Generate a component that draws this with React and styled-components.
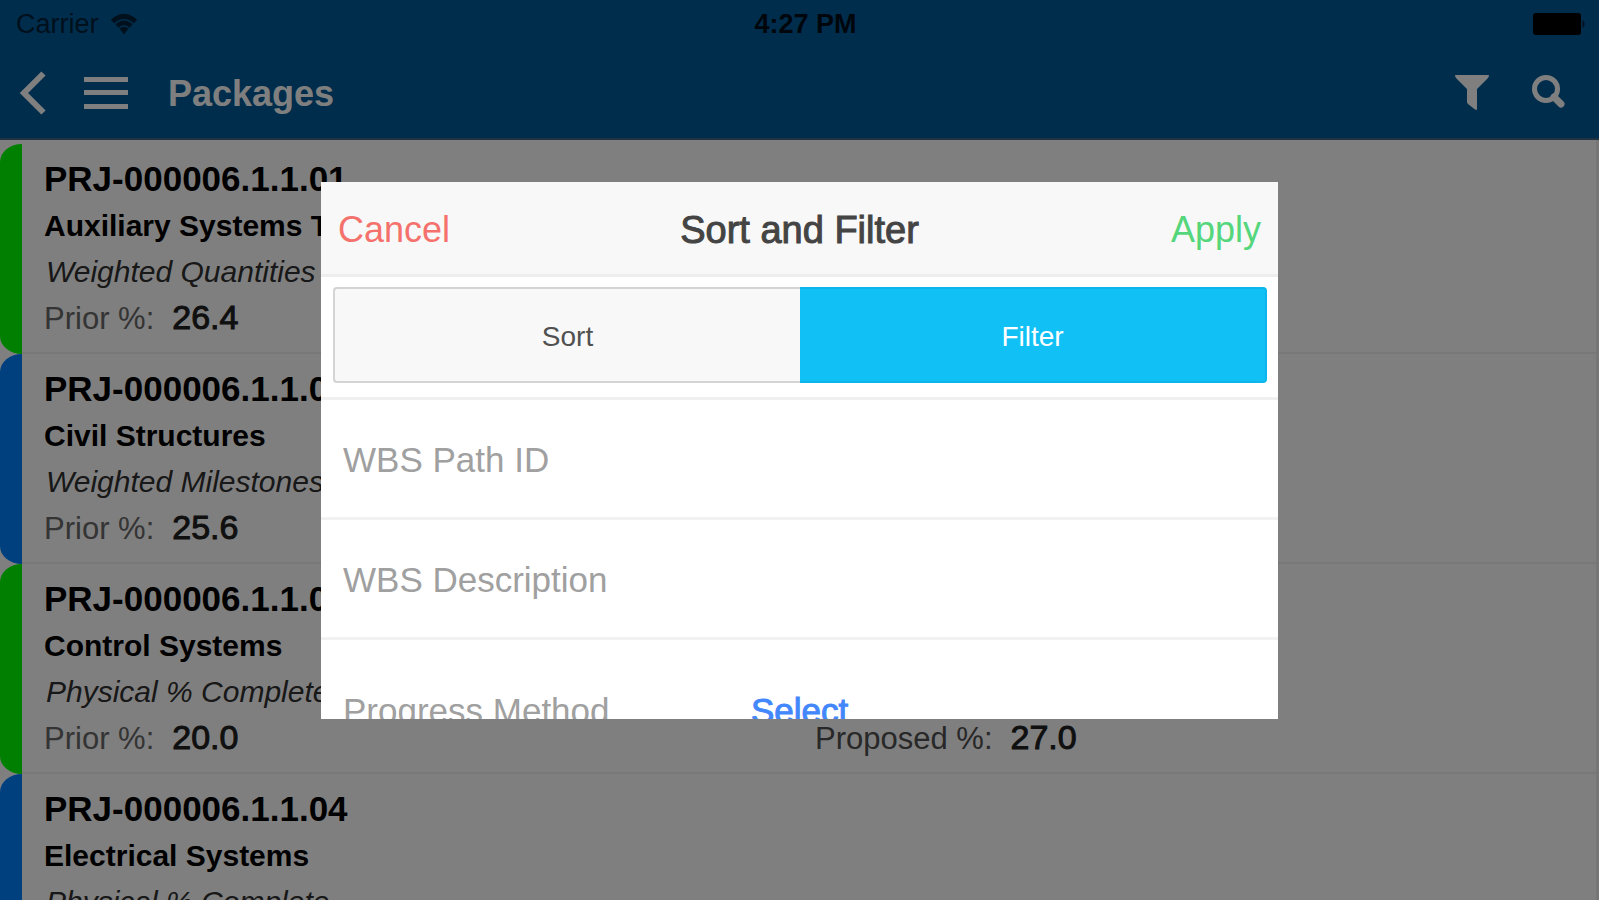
import React from "react";
import styled, { createGlobalStyle } from "styled-components";

const GlobalStyle = createGlobalStyle`
     * {
          box-sizing: border-box;
     }

     body {
          margin: 0;
          overflow: hidden;
          background-color: #ffffff;
          font-family: "Liberation Sans", Arial, sans-serif;
     }

     button, input, select {
          font-family: inherit;
     }
`;

const Page = styled.div`
     height: 100vh;
     overflow: hidden;
`;

const Header = styled.header`
     height: 140px;
     background-color: #005a98;
     border-bottom: 2px solid #406488;
`;

const StatusBar = styled.div`
     display: grid;
     grid-template-columns: 1fr auto 1fr;
     align-items: center;
     height: 48px;
     padding: 0 12px 0 16px;
     font-size: 27px;
`;

const Carrier = styled.div`
     display: flex;
     align-items: center;
     gap: 12px;
     color: #002038;
`;

const Time = styled.div`
     padding-left: 8px;
     font-weight: bold;
     color: #000c18;
`;

const Battery = styled.svg`
     justify-self: end;
`;

const NavBar = styled.nav`
     display: flex;
     align-items: center;
     height: 90px;
     padding: 0 34px 0 18px;
     gap: 38px;
     color: #ffffff;
`;

const IconButton = styled.button`
     display: flex;
     padding: 0;
     border: none;
     background: none;
     color: inherit;
`;

const Title = styled.h1`
     flex: 1;
     margin: 0;
     padding-top: 2px;
     font-size: 36px;
     line-height: 48px;
`;

const List = styled.ul`
     margin: 0;
     padding: 4px 0 0;
     border-right: 3px solid #ececec;
     list-style: none;
`;

const Item = styled.li`
     display: flex;
     height: 210px;
`;

/* Status strip, rounded on the outer side */
const Strip = styled.div`
     width: 22px;
     border-radius: 22px 0 0 22px / 18px 0 0 18px;
     background-color: ${(props) => props.$color};
`;

const ItemBody = styled.div`
     flex: 1;
     padding: 12px 22px 0;
     border-bottom: 2px solid #f0f0f0;
     line-height: 46px;
`;

const Code = styled.div`
     font-size: 35px;
     font-weight: bold;
`;

const Name = styled.div`
     font-size: 30px;
     font-weight: bold;
     line-height: 48px;
`;

const Method = styled.div`
     padding-left: 2px;
     font-size: 30px;
     font-style: italic;
     line-height: 44px;
     color: #303030;
`;

const Values = styled.div`
     display: grid;
     grid-template-columns: 1fr 1fr;
     column-gap: 12px;
`;

const Value = styled.div`
     display: flex;
     align-items: baseline;
     gap: 18px;
     font-size: 31px;
     color: ${(props) => (props.$strong ? "#505050" : "#686868")};

     strong {
          font-size: 34px;
          font-weight: normal;
          color: #202020;
          -webkit-text-stroke: 1px #202020;
     }
`;

const Overlay = styled.div`
     position: fixed;
     inset: 0;
     display: flex;
     padding: 182px 321px 181px;
     background-color: rgba(0, 0, 0, 0.5);
`;

const Dialog = styled.section`
     flex: 1;
     display: flex;
     flex-direction: column;
     overflow: hidden;
     background-color: #ffffff;
`;

const DialogHeader = styled.div`
     display: grid;
     grid-template-columns: 1fr auto 1fr;
     align-items: center;
     flex: none;
     height: 95px;
     padding: 4px 17px 0;
     border-bottom: 3px solid #eeeeee;
     background-color: #f8f8f8;
`;

const DialogTitle = styled.h2`
     margin: 0;
     font-size: 38px;
     font-weight: normal;
     color: #444444;
     -webkit-text-stroke: 1px #444444;
`;

const TextButton = styled.button`
     justify-self: ${(props) => props.$side};
     padding: 0;
     border: none;
     background: none;
     font-size: 36px;
     color: ${(props) => props.$color};
`;

const Segments = styled.div`
     display: flex;
     flex: none;
     height: 123px;
     padding: 10px 11px 14px 12px;
     border-bottom: 3px solid #f0f0f0;
`;

const Segment = styled.button`
     flex: 1;
     padding-top: 4px;
     border: 2px solid ${(props) => (props.$active ? "#0cb6ec" : "#d4d4d4")};
     border-radius: ${(props) => (props.$active ? "0 4px 4px 0" : "4px 0 0 4px")};
     border-${(props) => (props.$active ? "left" : "right")}: none;
     background-color: ${(props) => (props.$active ? "#11c1f5" : "#f8f8f8")};
     font-size: 28px;
     color: ${(props) => (props.$active ? "#ffffff" : "#505050")};
`;

const Field = styled.div`
     display: flex;
     align-items: center;
     flex: none;
     height: ${(props) => (props.$tall ? 142 : 120)}px;
     padding: 2px 22px 0;
     border-bottom: 3px solid #f2f2f2;
     font-size: 35px;
`;

const TextInput = styled.input`
     width: 100%;
     padding: 0;
     border: none;
     outline: none;
     background: none;
     font-size: 35px;
     color: #444444;

     &::placeholder {
          color: #a0a0a0;
     }
`;

const FieldLabel = styled.label`
     width: 408px;
     color: #a0a0a0;
`;

const Select = styled.select`
     appearance: none;
     padding: 0;
     border: none;
     background: none;
     font-size: 35px;
     color: #4387fd;
     -webkit-text-stroke: 1px #4387fd;
`;

const GREEN = "#00ff00";
const BLUE = "#0080ff";

const packages = [
     { code: "PRJ-000006.1.1.01", name: "Auxiliary Systems T", method: "Weighted Quantities", prior: "26.4", color: GREEN },
     { code: "PRJ-000006.1.1.02", name: "Civil Structures", method: "Weighted Milestones", prior: "25.6", color: BLUE },
     { code: "PRJ-000006.1.1.03", name: "Control Systems", method: "Physical % Complete", prior: "20.0", proposed: "27.0", color: GREEN },
     { code: "PRJ-000006.1.1.04", name: "Electrical Systems", method: "Physical % Complete", color: BLUE },
];

const PackageItem = ({ item }) => (
     <Item>
          <Strip $color={item.color} />
          <ItemBody>
               <Code>{item.code}</Code>
               <Name>{item.name}</Name>
               <Method>{item.method}</Method>
               {item.prior && (
                    <Values>
                         <Value>
                              Prior %: <strong>{item.prior}</strong>
                         </Value>
                         {item.proposed && (
                              <Value $strong>
                                   Proposed %: <strong>{item.proposed}</strong>
                              </Value>
                         )}
                    </Values>
               )}
          </ItemBody>
     </Item>
);

const App = () => (
     <Page>
          <GlobalStyle />
          <Header>
               <StatusBar>
                    <Carrier>
                         Carrier
                         <svg width="26" height="21" viewBox="0 0 26 21" fill="none" stroke="currentColor">
                              <path d="M1.5 7.5Q13-2.5 24.5 7.5" strokeWidth="5" />
                              <path d="M6 12Q13 5.5 20 12" strokeWidth="4.5" />
                              <path d="M8.5 14.5Q13 11 17.5 14.5L13 20.5Z" fill="currentColor" stroke="none" />
                         </svg>
                    </Carrier>
                    <Time>4:27 PM</Time>
                    <Battery width="54" height="22" viewBox="0 0 54 22">
                         <rect width="48" height="22" rx="3" />
                         <path d="M49.5 7Q54 11 49.5 15Z" fill="#002040" />
                    </Battery>
               </StatusBar>
               <NavBar>
                    <IconButton aria-label="Back">
                         <svg width="28" height="44" viewBox="0 0 28 44" fill="none" stroke="currentColor" strokeWidth="6">
                              <path d="M25.5 2.5L6 22L25.5 41.5" />
                         </svg>
                    </IconButton>
                    <IconButton aria-label="Menu">
                         <svg width="46" height="34" viewBox="0 0 46 34" fill="currentColor">
                              <path d="M0 1h44v5H0zM0 14h44v5H0zM0 28h44v5H0z" />
                         </svg>
                    </IconButton>
                    <Title>Packages</Title>
                    <IconButton aria-label="Filter">
                         <svg width="36" height="36" viewBox="0 0 36 36" fill="currentColor">
                              <path d="M0 0h34q0 2-1.5 3.500L22 14v20.500q-1 .5-2 0L13 29q-1-1-1-2V14L1.500 3.500Q0 2 0 0z" />
                         </svg>
                    </IconButton>
                    <IconButton aria-label="Search">
                         <svg width="36" height="36" viewBox="0 0 36 36" fill="none" stroke="currentColor">
                              <circle cx="17" cy="14" r="11.5" strokeWidth="5" />
                              <path d="M25 22L32 29" strokeWidth="7" strokeLinecap="round" />
                         </svg>
                    </IconButton>
               </NavBar>
          </Header>
          <List>
               {packages.map((item) => (
                    <PackageItem key={item.code} item={item} />
               ))}
          </List>
          <Overlay>
               <Dialog role="dialog" aria-labelledby="dialog-title">
                    <DialogHeader>
                         <TextButton $side="start" $color="#f4716c">Cancel</TextButton>
                         <DialogTitle id="dialog-title">Sort and Filter</DialogTitle>
                         <TextButton $side="end" $color="#55d67c">Apply</TextButton>
                    </DialogHeader>
                    <Segments>
                         <Segment>Sort</Segment>
                         <Segment $active>Filter</Segment>
                    </Segments>
                    <Field>
                         <TextInput aria-label="WBS Path ID" placeholder="WBS Path ID" />
                    </Field>
                    <Field>
                         <TextInput aria-label="WBS Description" placeholder="WBS Description" />
                    </Field>
                    <Field $tall>
                         <FieldLabel htmlFor="method">Progress Method</FieldLabel>
                         <Select id="method">
                              <option>Select</option>
                         </Select>
                    </Field>
               </Dialog>
          </Overlay>
     </Page>
);

export default App;
